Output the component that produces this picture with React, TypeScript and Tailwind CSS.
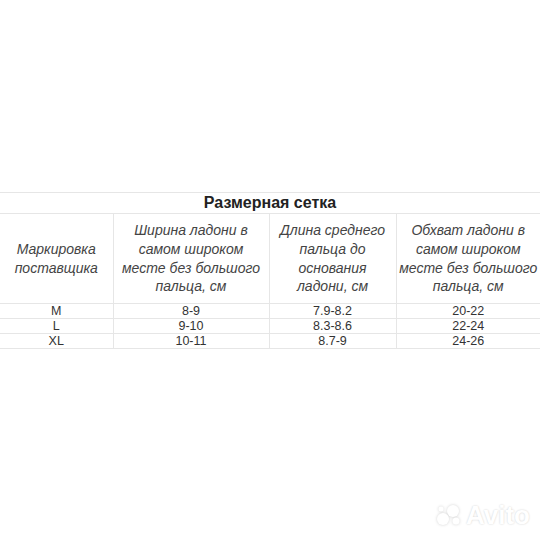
export default function App() {
  const rows = [
    ["M", "8-9", "7.9-8.2", "20-22"],
    ["L", "9-10", "8.3-8.6", "22-24"],
    ["XL", "10-11", "8.7-9", "24-26"],
  ];
  const headers = [
    ["Маркировка", "поставщика"],
    ["Ширина ладони в", "самом широком", "месте без большого", "пальца, см"],
    ["Длина среднего", "пальца до", "основания", "ладони, см"],
    ["Обхват ладони в", "самом широком", "месте без большого", "пальца, см"],
  ];

  return (
    <div
      className="relative w-[540px] h-[540px] bg-white pt-[192px] text-[#333]"
      style={{ fontFamily: '"Liberation Sans", Arial, sans-serif' }}
    >
      <table className="w-full table-fixed border-collapse">
        <colgroup>
          <col className="w-[113px]" />
          <col className="w-[156px]" />
          <col className="w-[127px]" />
          <col />
        </colgroup>
        <tbody>
          <tr className="h-[21px] border-t border-[#e6e6e6]">
            <td
              colSpan={4}
              className="border-b border-[#e6e6e6] text-center text-[16px] font-bold leading-[20px] text-[#222]"
            >
              Размерная сетка
            </td>
          </tr>
          <tr className="h-[90px]">
            {headers.map((lines, i) => (
              <td
                key={i}
                className={`border-b border-[#e6e6e6] p-0 text-center align-middle text-[14px] italic leading-[18.7px] whitespace-nowrap text-[#444] ${
                  i < 3 ? "border-r" : ""
                }`}
              >
                {lines.map((l, li) => (
                  <span key={li} className="block">
                    {l}
                  </span>
                ))}
              </td>
            ))}
          </tr>
          {rows.map((r, ri) => (
            <tr key={ri} className="h-[15px]">
              {r.map((c, ci) => (
                <td
                  key={ci}
                  className={`border-b border-[#e6e6e6] p-0 text-center text-[12.5px] leading-[13px] ${
                    ci < 3 ? "border-r" : ""
                  }`}
                >
                  {c}
                </td>
              ))}
            </tr>
          ))}
        </tbody>
      </table>

      <div className="absolute right-[10px] bottom-[12px] flex items-center gap-[2px]">
        <svg width="28" height="22" viewBox="0 0 28 22" className="drop-shadow-[0_0_1.5px_rgba(0,0,0,0.18)]">
          <circle cx="17" cy="7" r="6" fill="#fff" />
          <circle cx="7" cy="15" r="6" fill="#fff" />
          <circle cx="20" cy="17" r="3.5" fill="#fff" />
          <circle cx="5" cy="5" r="2.5" fill="#fff" />
        </svg>
        <span
          className="text-[26px] font-bold leading-none text-white"
          style={{ textShadow: "0 0 2px rgba(0,0,0,0.2)" }}
        >
          Avito
        </span>
      </div>
    </div>
  );
}
